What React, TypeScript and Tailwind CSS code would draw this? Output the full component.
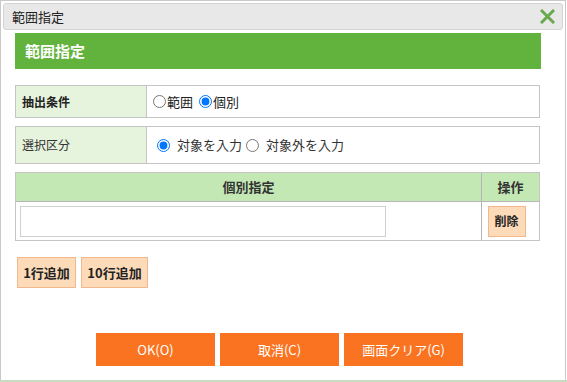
import React from "react";

const font = { fontFamily: '"Noto Sans CJK JP", "Noto Sans", sans-serif' };

export default function App() {
  return (
    <div className="w-[567px] h-[382px] bg-white flex flex-col overflow-hidden" style={font}>
      <div className="w-[566px] h-[380px] border border-[#c9c9c9] border-b-0 p-[2px] flex flex-col">
        <div className="h-[27px] bg-[#e8e8e8] border border-[#d4d4d4] rounded-[3px] flex items-center justify-between pl-[8px] pr-[7px]">
          <span className="text-[13px] text-[#222] leading-none">範囲指定</span>
          <svg width="15" height="15" viewBox="0 0 15 15">
            <path d="M2 2 L13 13 M13 2 L2 13" stroke="#6aa84f" strokeWidth="3" strokeLinecap="square" />
          </svg>
        </div>
        <div className="pl-[12px] flex flex-col">
          <div className="mt-[3px] w-[526px] h-[36px] bg-[#62b33d] flex items-center pl-[10px]">
            <span className="text-white font-bold text-[15px]">範囲指定</span>
          </div>
          <div className="mt-[16px] w-[525px] h-[33px] border border-[#c4c4c4] flex">
            <div className="w-[131px] bg-[#e6f4de] border-r border-[#c4c4c4] flex items-center pl-[6px]">
              <span className="text-[12px] font-bold text-[#222]">抽出条件</span>
            </div>
            <div className="flex items-center pl-[6px] text-[13px] text-[#222]">
              <label className="flex items-center">
                <input type="radio" name="a" className="m-0 mr-[1px] w-[13px] h-[13px] accent-[#0075ff]" />
                <span>範囲</span>
              </label>
              <label className="flex items-center ml-[6px]">
                <input type="radio" name="a" defaultChecked className="m-0 mr-[1px] w-[13px] h-[13px] accent-[#0075ff]" />
                <span>個別</span>
              </label>
            </div>
          </div>
          <div className="mt-[8px] w-[525px] h-[38px] border border-[#c4c4c4] flex">
            <div className="w-[131px] bg-[#e6f4de] border-r border-[#c4c4c4] flex items-center pl-[6px]">
              <span className="text-[12px] text-[#333]">選択区分</span>
            </div>
            <div className="flex items-center pl-[10px] text-[13px] text-[#333]">
              <label className="flex items-center">
                <input type="radio" name="b" defaultChecked className="m-0 mr-[7px] w-[13px] h-[13px] accent-[#0075ff]" />
                <span>対象を入力</span>
              </label>
              <label className="flex items-center ml-[4px]">
                <input type="radio" name="b" className="m-0 mr-[7px] w-[13px] h-[13px] accent-[#0075ff]" />
                <span>対象外を入力</span>
              </label>
            </div>
          </div>
          <div className="mt-[8px] w-[525px] border border-[#c4c4c4] flex flex-col">
            <div className="h-[29px] bg-[#c3e8b3] border-b border-[#b5b5b5] flex">
              <div className="w-[466px] border-r border-[#b5b5b5] flex items-center justify-center">
                <span className="text-[13px] font-bold text-[#333]">個別指定</span>
              </div>
              <div className="flex-1 flex items-center justify-center">
                <span className="text-[13px] font-bold text-[#333]">操作</span>
              </div>
            </div>
            <div className="h-[38px] flex">
              <div className="w-[466px] border-r border-[#b5b5b5] flex items-center pl-[4px]">
                <div className="w-[366px] h-[31px] border border-[#d0d0d0] bg-white" />
              </div>
              <div className="flex-1 flex items-center justify-center pr-[8px]">
                <div className="w-[38px] h-[31px] bg-[#fddab8] border border-[#f2b78a] flex items-center justify-center">
                  <span className="text-[12px] font-bold text-[#222]">削除</span>
                </div>
              </div>
            </div>
          </div>
          <div className="mt-[16px] flex gap-[5px] pl-[2px]">
            <div className="w-[59px] h-[31px] bg-[#fddab8] border border-[#f2b78a] flex items-center justify-center">
              <span className="text-[13px] font-bold text-[#222]">1行追加</span>
            </div>
            <div className="w-[67px] h-[31px] bg-[#fddab8] border border-[#f2b78a] flex items-center justify-center">
              <span className="text-[13px] font-bold text-[#222]">10行追加</span>
            </div>
          </div>
          <div className="mt-[45px] flex gap-[5px] pl-[81px]">
            <div className="w-[119px] h-[33px] bg-[#fa7321] flex items-center justify-center">
              <span className="text-[13px] text-white">OK(O)</span>
            </div>
            <div className="w-[119px] h-[33px] bg-[#fa7321] flex items-center justify-center">
              <span className="text-[13px] text-white">取消(C)</span>
            </div>
            <div className="w-[119px] h-[33px] bg-[#fa7321] flex items-center justify-center">
              <span className="text-[13px] text-white">画面クリア(G)</span>
            </div>
          </div>
        </div>
      </div>
      <div className="h-[2px] w-full bg-[#c8dcc4]" />
    </div>
  );
}
